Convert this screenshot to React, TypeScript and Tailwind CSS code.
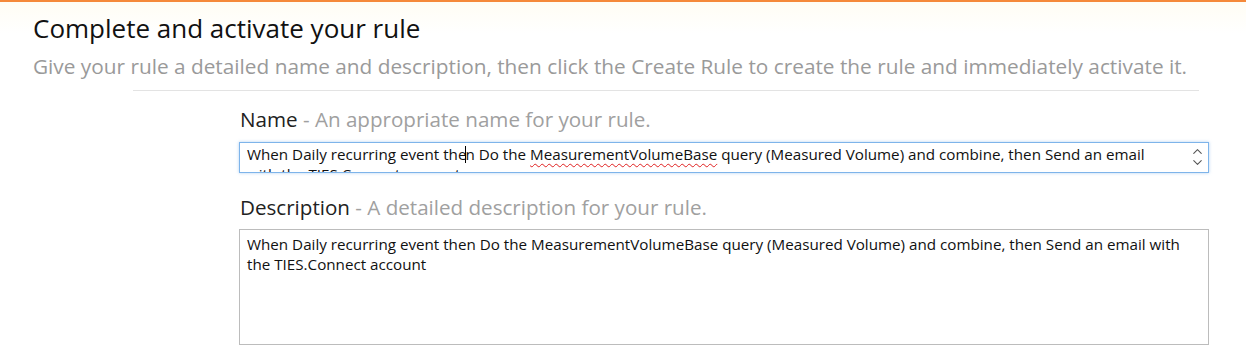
import { ChevronUp, ChevronDown } from "lucide-react";

const font = { fontFamily: '"Open Sans", "Noto Sans", sans-serif' };

export default function App() {
  return (
    <div className="w-full h-[354px] overflow-hidden bg-white border-t-2 border-[#f5893a]" style={font}>
      <div className="bg-gradient-to-b from-[#fffdf4] to-white to-[40%]">
        <div className="pl-[33px] pt-[10px]">
          <h1 className="text-[26px] leading-[32px] text-[#111]">Complete and activate your rule</h1>
          <p className="text-[20.8px] leading-[28px] mt-[8px] text-[#9a9a9a] whitespace-nowrap">
            Give your rule a detailed name and description, then click the Create Rule to create the rule and immediately activate it.
          </p>
        </div>
      </div>
      <div className="ml-[133px] mr-[47px] mt-[10px] border-t border-[#e3e3e3]" />

      <div className="ml-[239px] w-[970px] mt-[14px]">
        <div className="text-[20.6px] leading-[28px] pl-px whitespace-nowrap">
          <span className="text-[#222]">Name</span>
          <span className="text-[#a0a0a0]"> - An appropriate name for your rule.</span>
        </div>
        <div className="relative mt-[9px] h-[31px] border border-[#7eb4ea] shadow-[0_0_3px_rgba(126,180,234,0.6)] bg-white overflow-hidden">
          <div className="pl-[7px] pr-[36px] pt-[1px] text-[15.2px] leading-[20px] text-[#111]">
            When Daily recurring event the<span className="inline-block w-px h-[17px] -mx-px bg-black align-[-3px]" />n Do the{" "}
            <span className="underline decoration-wavy decoration-[#e02020] decoration-1 underline-offset-[3px]">MeasurementVolumeBase</span>{" "}
            query (Measured Volume) and combine, then Send an email with the TIES.Connect account
          </div>
          <div className="absolute right-[2px] top-[1px] w-[18px] flex flex-col items-center text-[#555]">
            <ChevronUp className="w-[17px] h-[15px] -mb-[4px]" strokeWidth={1.7} />
            <ChevronDown className="w-[17px] h-[15px]" strokeWidth={1.7} />
          </div>
        </div>

        <div className="text-[20.6px] leading-[28px] pl-px mt-[20px] whitespace-nowrap">
          <span className="text-[#222]">Description</span>
          <span className="text-[#a0a0a0]"> - A detailed description for your rule.</span>
        </div>
        <div className="mt-[8px] h-[116px] border border-[#bcbcbc] bg-white">
          <div className="pl-[7px] pr-[13px] pt-[4px] text-[15.2px] leading-[20px] text-[#111]">
            When Daily recurring event then Do the MeasurementVolumeBase query (Measured Volume) and combine, then Send an email with the TIES.Connect account
          </div>
        </div>
      </div>
    </div>
  );
}
